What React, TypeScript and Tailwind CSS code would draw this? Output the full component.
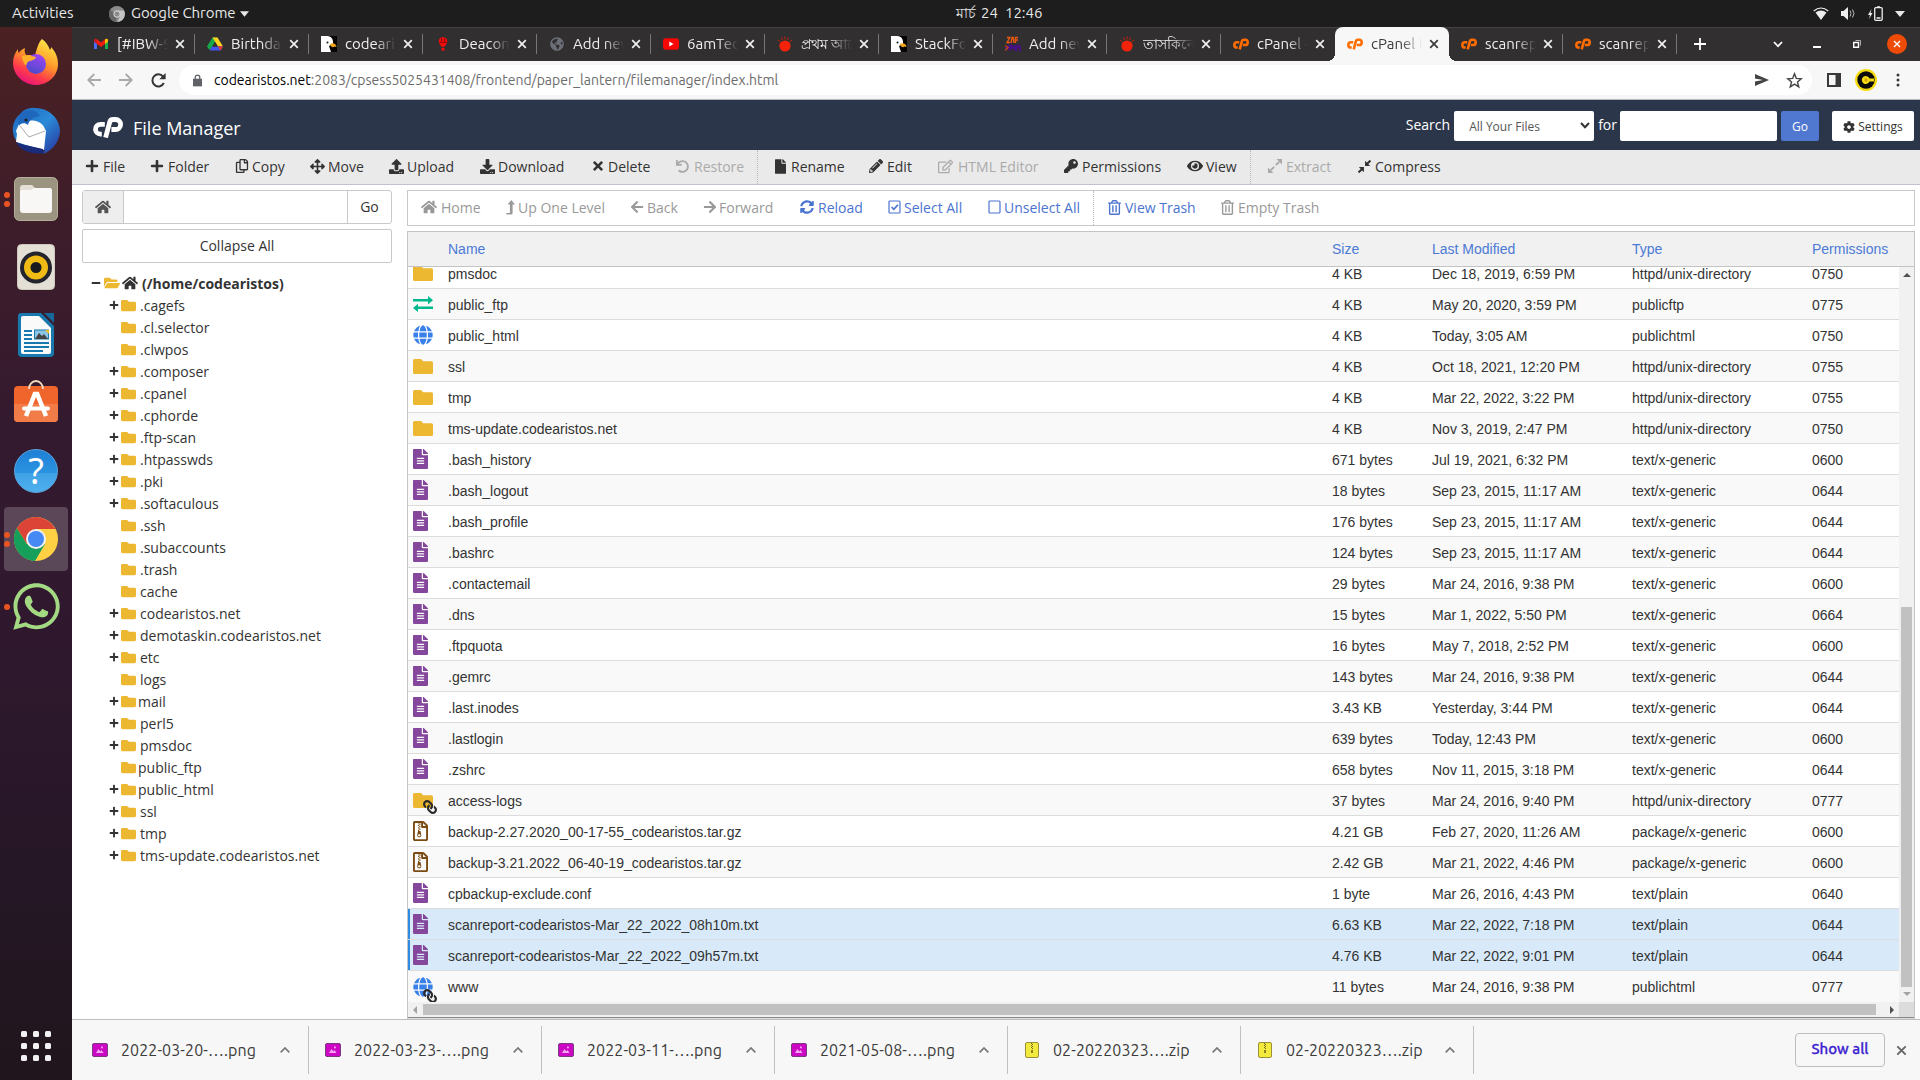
import React from "react";
import {
  FaPlus, FaMinus, FaRegCopy, FaArrowsAlt, FaUpload, FaDownload, FaTimes, FaUndo, FaFile,
  FaPencilAlt, FaRegEdit, FaKey, FaEye, FaHome,
  FaArrowLeft, FaArrowRight, FaSyncAlt, FaRegTrashAlt, FaFolder, FaFolderOpen, FaGlobe,
  FaFileAlt, FaRegFileArchive, FaLink, FaCog, FaWhatsapp, FaGlobeAmericas,
} from "react-icons/fa";

type IconType = React.ComponentType<{ className?: string }>;

const UI = "font-['Ubuntu','Noto_Sans',sans-serif]";

function CpLogo({ className }: { className?: string }) {
  return (
    <svg viewBox="0 0 30 21" className={className} fill="none" stroke="currentColor" strokeWidth="4.800">
      <path d="M11.800 7.300H7.400a4.900 4.900 0 0 0 0 9.800h1.400" />
      <path d="M12.600 20.500 16.700 5.200q.7-2.700 3.400-2.700h2.500a4.800 4.800 0 0 1 0 10h-4.200" />
    </svg>
  );
}

function CheckSquare({ className }: { className?: string }) {
  return (
    <svg viewBox="0 0 14 14" className={className} fill="none" stroke="currentColor">
      <rect x="1" y="1" width="11" height="12" rx="1" strokeWidth="1.2" />
      <path d="M3.600 7l2.200 2.300 4.200-4.600" strokeWidth="1.700" />
    </svg>
  );
}
function EmptySquare({ className }: { className?: string }) {
  return (
    <svg viewBox="0 0 14 14" className={className} fill="none" stroke="currentColor">
      <rect x="1" y="1" width="11" height="12" rx="1" strokeWidth="1.2" />
    </svg>
  );
}
function LevelUp({ className }: { className?: string }) {
  return (
    <svg viewBox="0 0 9 15" className={className} fill="currentColor">
      <path d="M5.300 0L9 4.600H6.600V13q0 1.600-1.600 1.600H.6L0 12.900h3.900V4.600H1.600z" />
    </svg>
  );
}
function Expand({ className }: { className?: string }) {
  return (
    <svg viewBox="0 0 14 14" className={className} fill="currentColor" stroke="currentColor">
      <path d="M8.500 0H14v5.500zM0 8.500V14h5.500z" stroke="none" />
      <path d="M7.800 6.200l3.400-3.400M6.200 7.800l-3.400 3.400" strokeWidth="1.900" />
    </svg>
  );
}
function Compress({ className }: { className?: string }) {
  return (
    <svg viewBox="0 0 14 14" className={className} fill="currentColor" stroke="currentColor">
      <path d="M7.600.9v5.500h5.500zM.9 7.600h5.500v5.500z" stroke="none" />
      <path d="M9.600 4.400L13.400.6M4.400 9.600L.6 13.400" strokeWidth="2.200" />
    </svg>
  );
}

/* ---------- favicons ---------- */
function Gmail() {
  return (
    <svg viewBox="0 0 16 16" className="size-4">
      <path d="M1 4v9h3V7z" fill="#4a6cf7" />
      <path d="M15 4v9h-3V7z" fill="#16b04a" />
      <path d="M4 3.2 8 6.500l4-3.300V8L8 11 4 8z" fill="#f21c0d" />
      <path d="M1 4.200C1 2.600 2.800 2.300 4 3.200V8L1 5.700z" fill="#c9181e" />
      <path d="M15 4.200c0-1.600-1.800-1.900-3-1V8l3-2.300z" fill="#fbbc04" />
    </svg>
  );
}
function Drive() {
  return (
    <svg viewBox="0 0 16 16" className="size-4">
      <path d="M5.500 1.500h5L5 11l-2.500 3L0 10.500z" fill="#16a94b" />
      <path d="M5.500 1.500h5L16 10.500h-5z" fill="#ffd21f" />
      <path d="M5 10.500h11L13.500 14.500h-11z" fill="#4353ee" />
      <path d="M11 10.500h5l-2.500 4z" fill="#e8342c" />
      <path d="M8 6l2.700 4.500H5.300z" fill="#322f30" />
    </svg>
  );
}
function Eagle() {
  return (
    <svg viewBox="0 0 16 16" className="size-4">
      <rect width="16" height="16" fill="#050505" />
      <path d="M0 0h6c5 0 6.500 4 6 8l-4 2 2 6H0z" fill="#fff" />
      <path d="M9 8c3-1.500 6-.5 6.500 3l-2-.5C12 12 9.500 11 9 8z" fill="#f2a41b" />
      <circle cx="6.500" cy="6.500" r="1" fill="#111" />
    </svg>
  );
}
function Balloon() {
  return (
    <svg viewBox="0 0 16 16" className="size-4">
      <path d="M8 1.300c3 0 4.300 1.800 4.300 4S10 9.700 9.500 10.700h-3C6 9.700 3.700 7.500 3.700 5.300S5 1.300 8 1.300z" fill="#f30d0d" />
      <path d="M4.500 6.300h7M6.500 2.500v2.500M9.500 2.500v2.500" stroke="#7c0505" strokeWidth="1" />
      <rect x="6.500" y="11.800" width="3" height="2.800" fill="#f30d0d" />
    </svg>
  );
}
function Alo() {
  return (
    <svg viewBox="0 0 16 16" className="size-4">
      <ellipse cx="8" cy="10" rx="5.600" ry="5.500" fill="#f7220a" />
      <path d="M8 .5v3M4.500 1.500l1 2.500M11.500 1.500l-1 2.500M1 4l2.500 2M15 4l-2.500 2" stroke="#c3230f" strokeWidth="1" />
    </svg>
  );
}
function ZayExpress() {
  return (
    <svg viewBox="0 0 16 16" className="size-4" fill="none" strokeWidth="1.400">
      <path d="M2 1.500h3L2 6.500h3M6 7l1.200-5.500h1L9 7M10.500 7V1.500H13M10.500 4H13" stroke="#ea5a12" />
      <path d="M3.500 8.500v6M5.500 14.500v-5h2v2.500h-2M9.500 14.500v-5M12.500 9.500h-1.500v5h1.500M15.500 9.500h-1.500V12h1.500v2.500H14M0 11.500h16" stroke="#4a0d8c" />
      <path d="M0 9.500l3 2-3 3" stroke="#c4421f" />
    </svg>
  );
}
const Yt = () => (
  <svg viewBox="0 0 16 16" className="size-4">
    <rect y="2.300" width="16" height="11.500" rx="3" fill="#f90606" />
    <path d="M6.300 5.500v5l4.200-2.500z" fill="#fff" />
  </svg>
);
const GlobeFav = () => <FaGlobeAmericas className="size-[14px] text-[#6b7078]" />;
const Cp = () => <CpLogo className="h-3 w-[17px] text-[#ff6c00]" />;

const tabs: { icon: React.ComponentType; label: string; active?: boolean; noDivider?: boolean; bn?: boolean }[] = [
  { icon: Gmail, label: "[#IBW-9" },
  { icon: Drive, label: "Birthda" },
  { icon: Eagle, label: "codeari" },
  { icon: Balloon, label: "Deacon" },
  { icon: GlobeFav, label: "Add nev" },
  { icon: Yt, label: "6amTec" },
  { icon: Alo, label: "প্রথম আলো", bn: true },
  { icon: Eagle, label: "StackFo" },
  { icon: ZayExpress, label: "Add nev" },
  { icon: Alo, label: "তাসকিনে", bn: true },
  { icon: Cp, label: "cPanel -", noDivider: true },
  { icon: Cp, label: "cPanel F", active: true, noDivider: true },
  { icon: Cp, label: "scanrep" },
  { icon: Cp, label: "scanrep" },
];

function X({ className }: { className?: string }) {
  return (
    <svg viewBox="0 0 10 10" className={className} fill="none" stroke="currentColor" strokeWidth="1.700">
      <path d="M1.200 1.200l7.600 7.600M8.800 1.200l-7.600 7.600" />
    </svg>
  );
}

function TabStrip() {
  return (
    <div className={`flex h-[34px] shrink-0 border-t border-[#454344] bg-[#322f30] pl-[9px] text-[14px] ${UI}`}>
      {tabs.map((t, i) => (
        <div
          key={i}
          className={
            t.active
              ? "relative -mt-px flex h-[34px] w-[114px] items-center rounded-t-[8px] bg-[#f7f7f7] pl-[12px] text-[#3a3a3a]"
              : "relative flex h-[32px] w-[114px] items-center pl-[12px] text-[#f0f0f0]"
          }
        >
          {t.active && (
            <>
              <span className="absolute bottom-0 -left-2 size-2 bg-[radial-gradient(circle_at_0_0,transparent_8px,#f7f7f7_8px)]" />
              <span className="absolute -right-2 bottom-0 size-2 bg-[radial-gradient(circle_at_100%_0,transparent_8px,#f7f7f7_8px)]" />
            </>
          )}
          <span className="flex w-4 items-center justify-center"><t.icon /></span>
          <span
            className={
              t.bn
                ? "ml-[8px] h-6 w-[51px] text-[14px] leading-6 whitespace-nowrap [mask-image:linear-gradient(to_right,#000_55%,transparent)]"
                : "ml-[8px] h-6 w-[51px] text-[15px] leading-[23px] whitespace-nowrap [mask-image:linear-gradient(to_right,#000_60%,transparent)]"
            }
          >
            {t.label}
          </span>
          <X className="ml-[7px] size-[10px]" />
          {!t.noDivider && <span className="absolute top-[6px] right-0 h-5 w-px bg-[#777]" />}
        </div>
      ))}
      <div className="flex h-8 flex-1 items-center text-white">
        <svg viewBox="0 0 14 14" className="ml-4 size-[14px]" stroke="currentColor" strokeWidth="1.800"><path d="M7 1v12M1 7h12" /></svg>
        <svg viewBox="0 0 10 7" className="ml-[66px] h-[7px] w-[10px]" fill="none" stroke="currentColor" strokeWidth="1.800"><path d="M1 1l4 4.300L9 1" /></svg>
        <span className="mt-[6px] ml-[30px] h-[1.500px] w-2 bg-white" />
        <svg viewBox="0 0 8 8" className="ml-8 size-2" fill="none" stroke="currentColor"><path d="M.7 2.500h4.800v4.800H.7z" strokeWidth="1.400" /><path d="M2.500.5h5v5" strokeWidth=".6" /></svg>
        <span className="ml-[26px] flex size-5 items-center justify-center rounded-full bg-[#ee4b08]"><X className="size-[8px]" /></span>
      </div>
    </div>
  );
}

function AddressBar() {
  return (
    <div className={`flex h-[39px] shrink-0 items-center border-b border-[#b6bac0] bg-[#f7f7f7] pl-[15px] ${UI}`}>
      <svg viewBox="0 0 14 14" className="size-[14px]" fill="none" stroke="#a9a9a9" strokeWidth="1.800"><path d="M14 7H1.500M7.300 1L1.300 7l6 6" /></svg>
      <svg viewBox="0 0 14 14" className="ml-[18px] size-[14px]" fill="none" stroke="#a9a9a9" strokeWidth="1.800"><path d="M0 7h12.500M6.700 1l6 6-6 6" /></svg>
      <svg viewBox="0 0 15 15" className="ml-[18px] size-[15px]" fill="none" stroke="#333" strokeWidth="2"><path d="M12.800 10A6 6 0 1 1 12 3.500" /><path d="M14.600 0v6.300H8.300z" fill="#333" stroke="none" /></svg>
      <div className="ml-[13px] flex h-[30px] w-[1633px] items-center rounded-full bg-white pl-[14px]">
        <svg viewBox="0 0 10 13" className="h-[13px] w-[9px]" fill="#5f6368"><path d="M0 4.500h10V13H0z" /><path d="M2.500 5V3a2.500 2.500 0 0 1 5 0v2" fill="none" stroke="#5f6368" strokeWidth="1.400" /></svg>
        <span className="ml-[12px] text-[14px] tracking-[-0.01px] whitespace-nowrap text-[#6c6c6c]">
          <span className="text-black">codearistos.net</span>:2083/cpsess5025431408/frontend/paper_lantern/filemanager/index.html
        </span>
        <svg viewBox="0 0 14 12" className="ml-auto h-[12px] w-[14px]" fill="#444"><path d="M0 0l14 6-14 6V7.500L8 6 0 4.500z" /></svg>
        <svg viewBox="0 0 24 24" className="mr-[9px] ml-[17px] size-[17px]" fill="none" stroke="#444" strokeWidth="2"><path d="M12 2.500l2.600 6.600 7 .5-5.400 4.500 1.800 6.900-6-3.900-6 3.900 1.800-6.900L2.400 9.600l7-.5z" /></svg>
      </div>
      <svg viewBox="0 0 14 14" className="ml-[15px] size-[14px]"><path d="M1 1h12v12H1z" fill="none" stroke="#3a3a3a" strokeWidth="2" /><path d="M8.500 0H14v14H8.500z" fill="#3a3a3a" /></svg>
      <svg viewBox="0 0 22 22" className="ml-[14px] size-[22px]"><circle cx="11" cy="11" r="11" fill="#f5dc12" /><circle cx="11" cy="11" r="8.700" fill="#0a0a0a" /><path d="M19 9.500h-4.500a4 4 0 1 0 0 3H19z" fill="#f5dc12" /><circle cx="11" cy="11" r="1.700" fill="#d8a80f" /></svg>
      <svg viewBox="0 0 4 14" className="ml-[19px] h-[14px] w-[4px]" fill="#3a3a3a"><circle cx="2" cy="2" r="1.500" /><circle cx="2" cy="7" r="1.500" /><circle cx="2" cy="12" r="1.500" /></svg>
    </div>
  );
}

type Tool = { icon: IconType; label: string; w: string; slot: string; size: string; off?: boolean; sep?: boolean };

const tools: Tool[] = [
  { icon: FaPlus, label: "File", w: "w-[65px]", slot: "w-[18px]", size: "size-[14px]" },
  { icon: FaPlus, label: "Folder", w: "w-[85px]", slot: "w-[18px]", size: "size-[14px]" },
  { icon: FaRegCopy, label: "Copy", w: "w-[75px]", slot: "w-[17px]", size: "size-[14px]" },
  { icon: FaArrowsAlt, label: "Move", w: "w-[79px]", slot: "w-[18px]", size: "size-[15px]" },
  { icon: FaUpload, label: "Upload", w: "w-[91px]", slot: "w-[18px]", size: "size-[15px]" },
  { icon: FaDownload, label: "Download", w: "w-[111px]", slot: "w-[18px]", size: "size-[15px]" },
  { icon: FaTimes, label: "Delete", w: "w-[85px]", slot: "w-[17px]", size: "size-[14px]" },
  { icon: FaUndo, label: "Restore", w: "w-[81px]", slot: "w-[18px]", size: "size-[13px]", off: true },
  { icon: FaFile, label: "Rename", w: "w-[94px]", slot: "w-[16px]", size: "h-[15px] w-[11px]", sep: true },
  { icon: FaPencilAlt, label: "Edit", w: "w-[69px]", slot: "w-[18px]", size: "size-[14px]" },
  { icon: FaRegEdit, label: "HTML Editor", w: "w-[126px]", slot: "w-[20px]", size: "size-[15px]", off: true },
  { icon: FaKey, label: "Permissions", w: "w-[123px]", slot: "w-[18px]", size: "size-[14px]" },
  { icon: FaEye, label: "View", w: "w-[63px]", slot: "w-[19px]", size: "size-[16px]" },
  { icon: Expand, label: "Extract", w: "w-[90px]", slot: "w-[18px]", size: "size-[14px]", off: true, sep: true },
  { icon: Compress, label: "Compress", w: "w-[90px]", slot: "w-[17px]", size: "size-[13px]" },
];

const nav: Tool[] = [
  { icon: FaHome, label: "Home", w: "w-[85px]", slot: "w-[20px]", size: "size-[16px]", off: true },
  { icon: LevelUp, label: "Up One Level", w: "w-[124px]", slot: "w-[12px]", size: "h-[15px] w-[9px]", off: true },
  { icon: FaArrowLeft, label: "Back", w: "w-[73px]", slot: "w-[17px]", size: "size-[14px]", off: true },
  { icon: FaArrowRight, label: "Forward", w: "w-[97px]", slot: "w-[16px]", size: "size-[14px]", off: true },
  { icon: FaSyncAlt, label: "Reload", w: "w-[88px]", slot: "w-[18px]", size: "size-[14px]" },
  { icon: CheckSquare, label: "Select All", w: "w-[100px]", slot: "w-[16px]", size: "size-[14px]" },
  { icon: EmptySquare, label: "Unselect All", w: "w-[105px]", slot: "w-[16px]", size: "size-[14px]" },
  { icon: FaRegTrashAlt, label: "View Trash", w: "w-[113px]", slot: "w-[17px]", size: "h-[15px] w-[13px]", sep: true },
  { icon: FaRegTrashAlt, label: "Empty Trash", w: "w-[113px]", slot: "w-[17px]", size: "h-[15px] w-[13px]", off: true },
];

function Tools({ items, on, off, gap }: { items: Tool[]; on: string; off: string; gap: string }) {
  return (
    <>
      {items.map((t) => (
        <React.Fragment key={t.label}>
          {t.sep && <span className={`h-full border-l border-dotted border-[#bcbcbc] ${gap}`} />}
          <span className={`flex shrink-0 items-center pb-[2px] whitespace-nowrap ${t.w} ${t.off ? off : on}`}>
            <span className={`flex shrink-0 ${t.slot}`}><t.icon className={t.size} /></span>
            {t.label}
          </span>
        </React.Fragment>
      ))}
    </>
  );
}

const tree: [string, boolean][] = [
  [".cagefs", true], [".cl.selector", false], [".clwpos", false], [".composer", true], [".cpanel", true],
  [".cphorde", true], [".ftp-scan", true], [".htpasswds", true], [".pki", true], [".softaculous", true],
  [".ssh", false], [".subaccounts", false], [".trash", false], ["cache", false], ["codearistos.net", true],
  ["demotaskin.codearistos.net", true], ["etc", true], ["logs", false], ["mail", true], ["perl5", true],
  ["pmsdoc", true], ["public_ftp", false], ["public_html", true], ["ssl", true], ["tmp", true],
  ["tms-update.codearistos.net", true],
];

function Sidebar() {
  return (
    <div className="ml-[10px] w-[310px] shrink-0 pt-[5px]">
      <div className="flex h-[34px] rounded-[3px] border border-[#c9c9c9]">
        <div className="flex w-[41px] items-center justify-center border-r border-[#c9c9c9] bg-[#eee]"><FaHome className="size-4 text-[#555]" /></div>
        <div className="flex-1" />
        <div className="flex w-[44px] items-center justify-center border-l border-[#c9c9c9] pb-px">Go</div>
      </div>
      <div className="mt-[5px] flex h-[34px] items-center justify-center rounded-[2px] border border-[#c9c9c9] pb-[2px]">Collapse All</div>
      <div className="mt-[9px] flex h-[22px] items-center pl-[9px] font-bold">
        <FaMinus className="size-[10px]" />
        <FaFolderOpen className="ml-[3px] size-4 text-[#ecb731]" />
        <FaHome className="ml-[2px] size-4" />
        <span className="ml-[4px]">(/home/codearistos)</span>
      </div>
      {tree.map(([name, plus]) => (
        <div key={name} className="flex h-[22px] items-center pl-[27px]">
          <span className="w-[12px]">{plus && <FaPlus className="size-[10px]" />}</span>
          <FaFolder className="size-[15px] text-[#ecb731]" />
          <span className={["mail", "public_ftp", "public_html"].includes(name) ? "ml-[2px]" : "ml-[4px]"}>{name}</span>
        </div>
      ))}
    </div>
  );
}

function FolderIcon() {
  return <svg viewBox="0 0 20 15" className="h-[15px] w-5" fill="#ecb731"><path d="M1.500 0H8l2.200 2.200h8.300A1.500 1.500 0 0 1 20 3.700v9.800a1.500 1.500 0 0 1-1.500 1.500h-17A1.500 1.500 0 0 1 0 13.500v-12A1.500 1.500 0 0 1 1.500 0z" /></svg>;
}
function ExchangeIcon() {
  return <svg viewBox="0 0 20 16" className="h-[16px] w-5" fill="#00b88c"><path d="M0 3h15V0l5 4.200-5 4.200V5.600H0zM20 10.400H5V7.800L0 12l5 4v-3h15z" /></svg>;
}
function LinkBadge() {
  return <FaLink className="absolute -right-1 -bottom-[6px] size-[14px] scale-x-[-1] text-[#2b2b2b]" />;
}

type Kind = "folder" | "ftp" | "globe" | "file" | "zip" | "folderlink" | "globelink";
function KindIcon({ kind }: { kind: Kind }) {
  switch (kind) {
    case "folder": return <FolderIcon />;
    case "ftp": return <ExchangeIcon />;
    case "globe": return <FaGlobe className="size-5 text-[#3a80ea]" />;
    case "file": return <FaFileAlt className="h-5 w-[15px] text-[#84479c]" />;
    case "zip": return <FaRegFileArchive className="h-5 w-[15px] text-[#7b4a12]" />;
    case "folderlink": return <span className="relative"><FolderIcon /><LinkBadge /></span>;
    case "globelink": return <span className="relative"><FaGlobe className="size-5 text-[#3a80ea]" /><LinkBadge /></span>;
  }
}

const files: [Kind, string, string, string, string, string][] = [
  ["folder", "pmsdoc", "4 KB", "Dec 18, 2019, 6:59 PM", "httpd/unix-directory", "0750"],
  ["ftp", "public_ftp", "4 KB", "May 20, 2020, 3:59 PM", "publicftp", "0775"],
  ["globe", "public_html", "4 KB", "Today, 3:05 AM", "publichtml", "0750"],
  ["folder", "ssl", "4 KB", "Oct 18, 2021, 12:20 PM", "httpd/unix-directory", "0755"],
  ["folder", "tmp", "4 KB", "Mar 22, 2022, 3:22 PM", "httpd/unix-directory", "0755"],
  ["folder", "tms-update.codearistos.net", "4 KB", "Nov 3, 2019, 2:47 PM", "httpd/unix-directory", "0750"],
  ["file", ".bash_history", "671 bytes", "Jul 19, 2021, 6:32 PM", "text/x-generic", "0600"],
  ["file", ".bash_logout", "18 bytes", "Sep 23, 2015, 11:17 AM", "text/x-generic", "0644"],
  ["file", ".bash_profile", "176 bytes", "Sep 23, 2015, 11:17 AM", "text/x-generic", "0644"],
  ["file", ".bashrc", "124 bytes", "Sep 23, 2015, 11:17 AM", "text/x-generic", "0644"],
  ["file", ".contactemail", "29 bytes", "Mar 24, 2016, 9:38 PM", "text/x-generic", "0600"],
  ["file", ".dns", "15 bytes", "Mar 1, 2022, 5:50 PM", "text/x-generic", "0664"],
  ["file", ".ftpquota", "16 bytes", "May 7, 2018, 2:52 PM", "text/x-generic", "0600"],
  ["file", ".gemrc", "143 bytes", "Mar 24, 2016, 9:38 PM", "text/x-generic", "0644"],
  ["file", ".last.inodes", "3.43 KB", "Yesterday, 3:44 PM", "text/x-generic", "0644"],
  ["file", ".lastlogin", "639 bytes", "Today, 12:43 PM", "text/x-generic", "0600"],
  ["file", ".zshrc", "658 bytes", "Nov 11, 2015, 3:18 PM", "text/x-generic", "0644"],
  ["folderlink", "access-logs", "37 bytes", "Mar 24, 2016, 9:40 PM", "httpd/unix-directory", "0777"],
  ["zip", "backup-2.27.2020_00-17-55_codearistos.tar.gz", "4.21 GB", "Feb 27, 2020, 11:26 AM", "package/x-generic", "0600"],
  ["zip", "backup-3.21.2022_06-40-19_codearistos.tar.gz", "2.42 GB", "Mar 21, 2022, 4:46 PM", "package/x-generic", "0600"],
  ["file", "cpbackup-exclude.conf", "1 byte", "Mar 26, 2016, 4:43 PM", "text/plain", "0640"],
  ["file", "scanreport-codearistos-Mar_22_2022_08h10m.txt", "6.63 KB", "Mar 22, 2022, 7:18 PM", "text/plain", "0644"],
  ["file", "scanreport-codearistos-Mar_22_2022_09h57m.txt", "4.76 KB", "Mar 22, 2022, 9:01 PM", "text/plain", "0644"],
  ["globelink", "www", "11 bytes", "Mar 24, 2016, 9:38 PM", "publichtml", "0777"],
];

function FileTable() {
  return (
    <div className="flex h-[788px] flex-col border border-b-0 border-[#c4c4c4] font-['Liberation_Sans',Arial,sans-serif] text-[14px]">
      <div className="grid h-[35px] shrink-0 grid-cols-[40px_884px_100px_200px_180px_1fr] items-center border-b border-[#c4c4c4] bg-[#f1f1f1] text-[#4b7ad6]">
        <span /><span>Name</span><span>Size</span><span>Last Modified</span><span>Type</span><span>Permissions</span>
      </div>
      <div className="flex h-[735px] shrink-0">
        <div className="flex w-[1491px] flex-col justify-end overflow-hidden">
          {files.map(([kind, ...cells], i) => {
            const sel = cells[0].startsWith("scanreport");
            const last = i === files.length - 1;
            return (
              <div
                key={cells[0]}
                className={`grid h-[31px] shrink-0 grid-cols-[40px_884px_100px_200px_180px_1fr] items-center ${last ? "" : "border-b border-[#dcdcdc]"} ${sel ? "bg-[#d8eaf9] shadow-[inset_2px_0_0_#2f8be0]" : i % 2 ? "bg-[#f9f9f9]" : "bg-white"}`}
              >
                <span className="flex pl-[5px]"><KindIcon kind={kind} /></span>
                {cells.map((c, j) => <span key={j} className={last ? "pt-px" : "pt-[2px]"}>{c}</span>)}
              </div>
            );
          })}
        </div>
        <div className="flex w-[15px] flex-col items-center bg-[#f1f1f1]">
          <svg viewBox="0 0 8 4" className="mt-[6px] h-[4px] w-[8px]" fill="#505050"><path d="M4 0l4 4H0z" /></svg>
          <span className="mt-[330px] h-[380px] w-[11px] bg-[#c1c1c1]" />
          <svg viewBox="0 0 8 4" className="mt-[5px] h-[4px] w-[8px]" fill="#a3a3a3"><path d="M4 4l4-4H0z" /></svg>
        </div>
      </div>
      <div className="flex h-[15px] shrink-0 items-center bg-[#f1f1f1]">
        <svg viewBox="0 0 4 8" className="ml-[5px] h-[8px] w-[4px]" fill="#a3a3a3"><path d="M0 4l4-4v8z" /></svg>
        <span className="ml-[6px] h-[11px] w-[1453px] bg-[#c1c1c1]" />
        <svg viewBox="0 0 4 8" className="ml-[14px] h-[8px] w-[4px]" fill="#505050"><path d="M4 4L0 0v8z" /></svg>
        <span className="ml-auto h-[15px] w-[15px] bg-[#dcdcdc]" />
      </div>
      <div className="h-px shrink-0 bg-[#8a8a8a]" />
      <div className="flex-1 bg-[#dcdcdc]" />
    </div>
  );
}

const downloads = ["2022-03-20-….png", "2022-03-23-….png", "2022-03-11-….png", "2021-05-08-….png", "02-20220323….zip", "02-20220323….zip"];

function DownloadBar() {
  return (
    <div className={`flex h-[61px] shrink-0 items-center border-t border-[#bdbdbd] bg-[#f7f7f7] pl-1 ${UI}`}>
      {downloads.map((d, i) => (
        <div key={i} className="flex h-[48px] w-[233px] items-center border-r border-[#c0c0c0] pl-4">
          {d.endsWith("png") ? (
            <svg viewBox="0 0 16 14" className="h-[14px] w-4"><rect x=".5" y=".5" width="15" height="13" rx="1.500" fill="#cc08c4" stroke="#7a3a80" /><path d="M4 10l2.500-4 1.800 2.500L9.500 7l2 3z" fill="#f6a8f2" /><rect x="9" y="3.500" width="1.800" height="1.800" fill="#f6a8f2" /></svg>
          ) : (
            <svg viewBox="0 0 16 16" className="mb-px h-[16px] w-4"><rect x="1.500" y=".5" width="13" height="15" rx="1.500" fill="#f3ea3e" stroke="#9c8f3a" /><path d="M7.500 1v6M8.500 2v6" stroke="#6f6520" strokeDasharray="1 1" /><path d="M7 8h2v3H7z" fill="#8b7f2a" /></svg>
          )}
          <span className="ml-[13px] w-[150px] text-[16px] tracking-[0.08px] whitespace-nowrap text-[#3b3b3b]">{d}</span>
          <svg viewBox="0 0 10 6" className="ml-[9px] h-[6px] w-[10px]" fill="none" stroke="#777" strokeWidth="1.700"><path d="M.7 5.300L5 1l4.300 4.300" /></svg>
        </div>
      ))}
      <div className="ml-auto flex h-[34px] w-[90px] items-center justify-center rounded-[4px] border border-[#bdbdbd] pb-[2px] text-[15px] font-medium text-[#3d1fd0] [-webkit-text-stroke:0.3px_#3d1fd0]">Show all</div>
      <X className="mr-[13px] ml-[11px] size-[11px] text-[#666]" />
    </div>
  );
}

/* ---------- dock ---------- */
function Firefox() {
  return (
    <svg viewBox="0 0 46 46" className="mb-[2px] size-[46px]">
      <defs>
        <linearGradient id="ff" x1=".8" y1="0" x2=".3" y2="1"><stop offset="0" stopColor="#fff04a" /><stop offset=".45" stopColor="#ff9a2a" /><stop offset=".75" stopColor="#ff3c4a" /><stop offset="1" stopColor="#e5107e" /></linearGradient>
        <linearGradient id="fp" x1=".7" y1="0" x2=".3" y2="1"><stop offset="0" stopColor="#a044f5" /><stop offset="1" stopColor="#4a4bc9" /></linearGradient>
      </defs>
      <path d="M29 0c4 3 6 6 8 11 1-1 1-2 1-3 5 5 7 11 7 17 0 12-10 21-22 21S0 36 0 24c0-6 2-10 5-14 0 2 0 3 1 4 1-2 3-4 6-5-1 3 0 5 1 7h9c2-6 3-12 7-16z" fill="url(#ff)" />
      <circle cx="23" cy="25" r="10" fill="url(#fp)" />
      <path d="M9 17c6-2 9 0 14 1-1 4-7 3-9 6 0 4-4 2-5-7z" fill="#ffb02a" />
    </svg>
  );
}
function Thunderbird() {
  return (
    <svg viewBox="0 0 48 48" className="size-[48px]">
      <defs><linearGradient id="tb" x1="0" y1="0" x2="1" y2="1"><stop offset="0" stopColor="#1d62b8" /><stop offset=".5" stopColor="#2b8bd8" /><stop offset="1" stopColor="#27309a" /></linearGradient></defs>
      <path d="M8 7c4-5 10-7 15-6 13 0 24 9 25 22 0 10-6 20-17 24l2-4c-14 2-30-3-32-18C0 18 3 11 8 7z" fill="url(#tb)" />
      <path d="M7 17c5-4 20-6 25 3l2 4-2 19-11-3-17-5 1-8 -1-3z" fill="#fff" />
      <path d="M8 19l9 11 16-6" fill="none" stroke="#aaa" />
      <path d="M9 7c7-6 16-4 19 2-7 1-11 4-12 9-3-3-8-2-9 1-1-5 0-9 2-12z" fill="#1f66bd" />
      <path d="M4 35l9 3 18 4 1 4C20 48 8 44 4 35z" fill="#1a2b7c" />
      <circle cx="14" cy="13" r="1.600" fill="#222" />
    </svg>
  );
}
function FilesIcon() {
  return (
    <svg viewBox="0 0 44 44" className="size-[44px]">
      <rect x=".5" y=".5" width="43" height="43" rx="5" fill="#9b9480" stroke="#b5ae9b" />
      <path d="M6 11q0-3 3-3h9l4 4v6H6z" fill="#e4e0d5" />
      <path d="M6 15q0-2 2-2h9l3-2h16q2 0 2 2v20q0 3-3 3H9q-3 0-3-3z" fill="#f8f7f5" />
    </svg>
  );
}
function Rhythmbox() {
  return (
    <svg viewBox="0 0 38 46" className="h-[46px] w-[38px]">
      <rect x=".5" y=".5" width="37" height="45" rx="4" fill="#e5e0d6" stroke="#cfc9bd" />
      <circle cx="19" cy="23.500" r="16" fill="#23242c" /><circle cx="19" cy="23.500" r="12" fill="#efbb14" /><circle cx="19" cy="23.500" r="5.500" fill="#1a1a1e" />
    </svg>
  );
}
function Writer() {
  return (
    <svg viewBox="0 0 38 46" className="h-[46px] w-[38px]">
      <path d="M4 1h20l13 13v27q0 4-4 4H5q-4 0-4-4V4q0-3 3-3z" fill="#1779ae" />
      <path d="M27 1h10v10z" fill="#14689a" />
      <path d="M6 4h16l12 12v24q0 2-2 2H6q-2 0-2-2V6q0-2 2-2z" fill="#fafafa" />
      <path d="M7 19h8M7 23h8M7 27h8M7 31h25M7 35h25M7 39h19" stroke="#1779ae" strokeWidth="1.800" />
      <rect x="17.500" y="18" width="14" height="9" fill="#8cc4e8" stroke="#1779ae" /><path d="M18 27l4-6 3 3 2-2 4 5z" fill="#444" /><path d="M28 18h4v4z" fill="#f0c020" />
    </svg>
  );
}
function Software() {
  return (
    <svg viewBox="0 0 46 44" className="mb-[4px] h-[44px] w-[46px]">
      <rect x="1" y="7" width="44" height="36" rx="4" fill="#f0652b" /><path d="M1 25h44v14q0 4-4 4H5q-4 0-4-4z" fill="#f27c48" />
      <path d="M16 10a7 8 0 0 1 14 0" fill="none" stroke="#f4dcbf" strokeWidth="1.800" />
      <path d="M13 37L21.800 15h2.400L33 37" fill="none" stroke="#fff" strokeWidth="4.500" /><path d="M11 29.500h24" stroke="#fff" strokeWidth="4" strokeLinecap="round" />
    </svg>
  );
}
function Help() {
  return (
    <span className="flex size-[44px] items-center justify-center rounded-full border border-[#5aa5dd] bg-[linear-gradient(#1f80d6_0,#2b93e0_54%,#3ea2e6_55%,#4fb0ee)] font-['Noto_Sans',sans-serif] text-[36px] leading-none text-white">?</span>
  );
}
function Chrome() {
  return (
    <svg viewBox="0 0 44 44" className="size-[44px]">
      <circle cx="22" cy="22" r="22" fill="#ffcf44" />
      <path d="M2.900 11A22 22 0 0 0 21 44L31 27 22 22 13 27z" fill="#159f5b" />
      <path d="M2.900 11L13 27 22 12h19.500A22 22 0 0 0 2.900 11z" fill="#dc4437" />
      <circle cx="22" cy="22" r="10" fill="#f2f2f2" /><circle cx="22" cy="22" r="8" fill="#4688f4" />
    </svg>
  );
}
const dock: { el: React.ReactNode; dots: number; active?: boolean }[] = [
  { el: <Firefox />, dots: 0 },
  { el: <Thunderbird />, dots: 0 },
  { el: <FilesIcon />, dots: 2 },
  { el: <Rhythmbox />, dots: 0 },
  { el: <Writer />, dots: 0 },
  { el: <Software />, dots: 0 },
  { el: <Help />, dots: 0 },
  { el: <Chrome />, dots: 2, active: true },
  { el: <FaWhatsapp className="mb-px size-[53px] text-[#a3d982]" />, dots: 1 },
];

function Dock() {
  return (
    <div className="flex w-[72px] shrink-0 flex-col bg-[linear-gradient(#4b2122_0,#3e1d2a_18%,#341a2f_38%,#2f182e_58%,#241724_85%,#20151c)] pt-[2px]">
      {dock.map((d, i) => (
        <div key={i} className="relative flex h-[68px] items-center justify-center">
          {d.active && <span className="absolute inset-x-1 inset-y-[2px] rounded-[4px] bg-white/20" />}
          <span className="relative">{d.el}</span>
          <span className="absolute left-1 flex flex-col gap-[3px]">
            {Array.from({ length: d.dots }, (_, k) => <span key={k} className="size-[6px] rounded-full bg-[#e95420]" />)}
          </span>
        </div>
      ))}
      <div className="mt-auto mb-[19px] grid grid-cols-3 gap-[6px] self-center">
        {Array.from({ length: 9 }, (_, k) => <span key={k} className="size-[6px] rounded-[1.500px] bg-[#f2f2f2]" />)}
      </div>
    </div>
  );
}

function TopBar() {
  return (
    <div className={`flex h-[27px] shrink-0 items-center bg-[#1d1d1d] text-[15px] text-[#e8e8e8] ${UI}`}>
      <div className="flex w-[956px] items-center pl-3">
        <span className="w-[97px]">Activities</span>
        <svg viewBox="0 0 16 16" className="size-4"><circle cx="8" cy="8" r="8" fill="#8b8b8b" /><path d="M8 8L1 4a8 8 0 0 0 6 12z" fill="#666" /><path d="M8 4.500h7a8 8 0 0 1-6.500 11.500L11 10z" fill="#c4c4c4" /><circle cx="8" cy="8" r="3.200" fill="#8b8b8b" stroke="#ddd" /></svg>
        <span className="ml-[6px] w-[104px] tracking-[-0.05px] whitespace-nowrap">Google Chrome</span>
        <svg viewBox="0 0 10 6" className="ml-[5px] h-[6px] w-[9px]" fill="#e8e8e8"><path d="M0 0h10L5 6z" /></svg>
      </div>
      <div className="flex items-center whitespace-pre"><span className="mr-[5px] text-[14px]">মার্চ</span><span>24</span><span className="ml-[7px]">12:46</span></div>
      <div className="flex flex-1 items-center justify-end pr-[15px]">
        <svg viewBox="0 0 16 13" className="h-[13px] w-4" fill="#eee"><path d="M8 13L2.500 5.500Q8 1.500 13.500 5.500z" /><path d="M.7 4Q8-2 15.300 4" fill="none" stroke="#eee" strokeWidth="1.200" /></svg>
        <svg viewBox="0 0 15 13" className="ml-3 h-[13px] w-[15px]" fill="#eee"><path d="M0 4h2.500L7 0v13L2.500 9H0z" /><path d="M9 3.500q2 3 0 6M11.500 2.500q3 4 0 8" fill="none" stroke="#bbb" /></svg>
        <svg viewBox="0 0 15 15" className="ml-3 h-[15px] w-[15px]" fill="none" stroke="#eee" strokeWidth="1.300"><rect x="6.700" y="1.700" width="7.500" height="12.600" rx="1" /><path d="M9 .8h3M8.500 12h4" /><path d="M3.500 3L0 9h2l-1 4 3.500-6h-2z" fill="#eee" stroke="none" /></svg>
        <svg viewBox="0 0 10 6" className="ml-[12px] h-[6px] w-[10px]" fill="#e8e8e8"><path d="M0 0h10L5 6z" /></svg>
      </div>
    </div>
  );
}

export default function App() {
  return (
    <div className="flex h-[1080px] w-[1920px] flex-col overflow-hidden bg-white text-[#333]">
      <TopBar />
      <div className="flex min-h-0 flex-1">
        <Dock />
        <div className="flex w-[1848px] flex-col">
          <TabStrip />
          <AddressBar />
          <div className="flex min-h-0 flex-1 flex-col font-['Open_Sans',sans-serif] text-[14px]">
            <div className="flex h-[50px] shrink-0 items-center bg-[#2c364a] pr-[6px] pl-[20px] text-white">
              <CpLogo className="mt-[5px] h-[21px] w-[32px]" />
              <span className="mt-[7px] ml-[9px] text-[18px]">File Manager</span>
              <div className="mt-px flex flex-1 items-center justify-end">
                <span className="mr-[4px] mb-[3px]">Search</span>
                <div className="flex h-[30px] w-[140px] items-center justify-between rounded-[2px] bg-white pr-[4px] pl-[15px] text-[12px] text-[#555]">
                  <span className="mt-[2px]">All Your Files</span>
                  <svg viewBox="0 0 10 7" className="h-[7px] w-[10px]" fill="none" stroke="#333" strokeWidth="2"><path d="M1 1l4 4.300L9 1" /></svg>
                </div>
                <span className="mr-[3px] mb-[3px] ml-[4px]">for</span>
                <div className="h-[30px] w-[157px] rounded-[2px] bg-white" />
                <div className="ml-[4px] flex h-[30px] w-[38px] items-center justify-center rounded-[2px] bg-[#5078d0] pt-[2px] text-[12px]">Go</div>
                <div className="ml-[13px] flex h-[30px] w-[82px] items-center justify-center rounded-[2px] bg-white pt-[2px] text-[12px] text-[#333]"><FaCog className="mr-[3px] size-[12px]" />Settings</div>
              </div>
            </div>
            <div className="flex h-[35px] shrink-0 items-center border-b border-[#c0c3cb] bg-[#eaeaea] pl-[13px]">
              <Tools items={tools} on="text-[#333]" off="text-[#aaa]" gap="mr-[17px]" />
            </div>
            <div className="flex min-h-0 flex-1">
              <Sidebar />
              <div className="ml-[15px] w-[1508px] pt-[5px]">
                <div className="mb-[5px] flex h-[36px] items-center border border-[#c9c9c9] pl-[13px]">
                  <Tools items={nav} on="text-[#4b74d0]" off="text-[#999]" gap="mr-[14px]" />
                </div>
                <FileTable />
              </div>
            </div>
          </div>
          <DownloadBar />
        </div>
      </div>
    </div>
  );
}
